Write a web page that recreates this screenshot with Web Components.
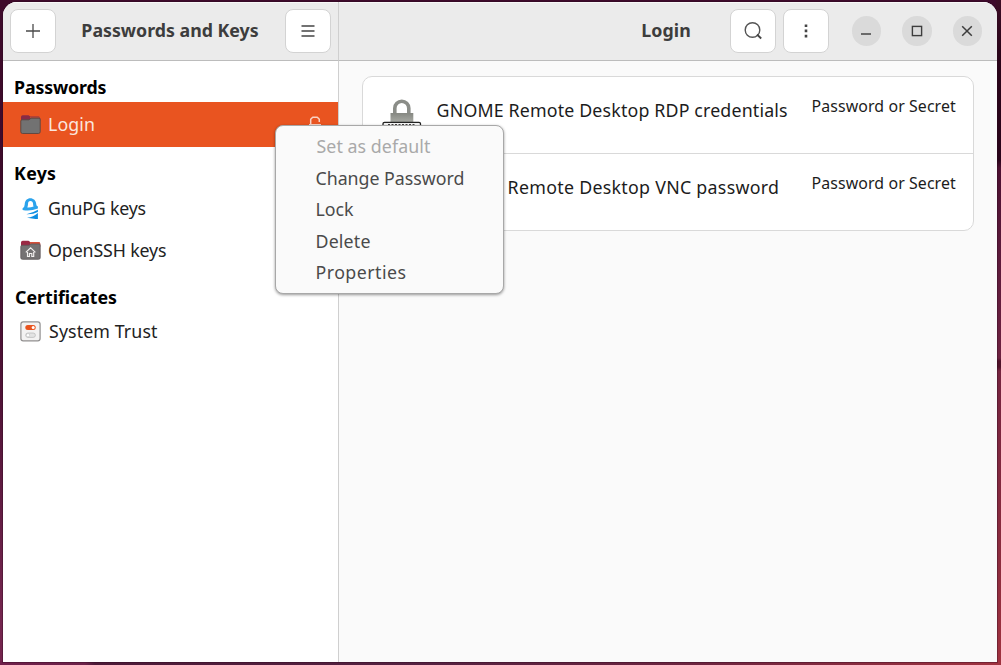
<!DOCTYPE html>
<html lang="en">
<head>
<meta charset="utf-8">
<title>Passwords and Keys</title>
<style>
html,body{margin:0;height:100%;overflow:hidden}
body{font-family:"Noto Sans","Open Sans",sans-serif;color:#1c1c1c}
</style>
</head>
<body>
<seahorse-desktop></seahorse-desktop>
<script>
const define = (name, html, ready) => {
  const t = document.createElement('template');
  t.innerHTML = html;
  customElements.define(name, class extends HTMLElement {
    constructor() {
      super();
      this.attachShadow({mode: 'open'}).append(t.content.cloneNode(true));
    }
    connectedCallback() { if (ready) ready(this, this.shadowRoot); }
  });
};

// Label whose tracking is set so that its ink spans the width in "w".
const ctx = document.createElement('canvas').getContext('2d');
define('fit-label', `<style>
:host{display:block;white-space:pre;line-height:24px;padding-bottom:2px;flex:none}
</style><slot></slot>`, (el) => {
  const size = el.getAttribute('size') || 17.8, weight = el.getAttribute('weight') || 400;
  const w = +el.getAttribute('w'), text = el.textContent;
  ctx.font = `${weight} ${size}px "Noto Sans"`;
  const m = ctx.measureText(text);
  const ink = m.actualBoundingBoxLeft + m.actualBoundingBoxRight;
  el.style.cssText += `;font-size:${size}px;font-weight:${weight};width:${w}px;` +
    `text-indent:${m.actualBoundingBoxLeft + .6}px;letter-spacing:${(w - .6 - ink) / (text.length - 1)}px`;
});

define('header-button', `<style>
:host{display:flex;box-sizing:border-box;width:46px;height:44px;border:1.5px solid #d3d3d3;border-radius:8px;background:#fff;align-items:center;justify-content:center;flex:none}
</style><slot></slot>`);

define('window-button', `<style>
:host{display:flex;width:29.5px;height:29.5px;border-radius:50%;background:#dadada;align-items:center;justify-content:center;flex:none}
</style><slot></slot>`);

define('side-heading', `<style>
:host{display:flex;box-sizing:border-box;height:41px;padding:13px 0 0 11.5px;align-items:center;color:#000}
</style><slot></slot>`);

define('side-row', `<style>
:host{display:flex;box-sizing:border-box;height:41.5px;padding:0 16px 0 17px;align-items:center;gap:7.5px;color:#222}
:host([selected]){height:45px;background:#e95420;color:#fbe6de}
::slotted([slot=icon]){flex:none;width:21px;height:21px}
.text{padding-top:1px}
:host([selected]) .text{padding-top:.5px}
.end{margin-left:auto;display:flex}
</style><slot name="icon"></slot><div class="text"><slot></slot></div><span class="end"><slot name="end"></slot></span>`);

define('key-row', `<style>
:host{display:flex;box-sizing:border-box;height:77px;padding:0 17px 0 18.5px;align-items:flex-start}
:host([divided]){border-bottom:1px solid #d9d9d9}
svg{width:40px;height:44px;margin:20px 15.5px 0 0;flex:none}
.name{margin-top:21px}
.kind{margin:16.5px 0 0 auto}
</style>
<svg viewBox="0 0 40 44">
<defs><linearGradient id="b" x1="0" y1="0" x2="0" y2="1"><stop offset="0" stop-color="#858781"/><stop offset="1" stop-color="#b2b4ae"/></linearGradient></defs>
<path d="M12.8 17V11.2a7 7 0 0 1 14 0V17" fill="none" stroke="#8b8d88" stroke-width="3.6"/>
<rect x="8.5" y="16" width="22.8" height="12" fill="url(#b)"/>
<rect x="1" y="25.300" width="37.500" height="14" rx="1.500" fill="#f5f5f5" stroke="#222" stroke-width="1.300"/>
<path d="M6 27.600h27" stroke="#444" stroke-width="1.400" stroke-dasharray="2 1.500"/>
</svg>
<div class="name"><slot name="name"></slot></div><div class="kind"><slot name="kind"></slot></div>`);

define('context-menu', `<style>
:host{display:flex;flex-direction:column;box-sizing:border-box;width:229px;height:169px;padding:5px 0 0 39.5px;border:1px solid #a8a8a8;border-radius:8px;background:#fafafa;box-shadow:0 1px 3px rgba(0,0,0,.4);color:#4a4a4a}
::slotted(*){box-sizing:border-box;height:31.5px;padding:0!important;line-height:30px!important}
::slotted([disabled]){color:#a9a9a9}
</style><slot></slot>`);

define('seahorse-desktop', `<style>
:host{display:block;position:relative;box-sizing:border-box;width:1001px;height:665px;padding:2px 4.5px 3.5px 3px;
background:
 linear-gradient(90deg,#70204b 0,#6c2149 85px,#4d1a38 95px,#552141 420px,#6e243f 700px,#a0323f 100%) 0 661px/100% 4px no-repeat,
 linear-gradient(180deg,#3d0d26 0,#2a0419 50px,#2a041b 160px,#4c1031 168px,#5c1a3b 255px,#6d2140 358px,#4e1229 361px,#511329 367px,#75243f 371px,#8c2c3e 560px,#a0323f 100%) 996px 0/5px 100% no-repeat,
 linear-gradient(180deg,#3e0a2b 0,#3e0b2b 200px,#521438 400px,#75264f 620px,#74244d 100%) 0 0/4px 100% no-repeat,
 #3e0a2b}
.window{display:grid;grid-template:59px 1fr/336px 1fr;width:993.5px;height:659.5px;border-radius:14px 14px 0 0;overflow:hidden;background:#fafafa;box-shadow:0 0 0 1px rgba(40,10,30,.35)}
header{display:flex;align-items:center;background:#ebebeb;border-bottom:1px solid #bcbcbc;box-sizing:border-box;box-shadow:inset 0 1px #f8f8f8}
.left{padding:0 7.500px 0 7px;justify-content:space-between}
.left,aside{border-right:1px solid #cfcfcf}
.right{padding-right:14.300px;justify-content:flex-end}
aside{background:#fff;box-sizing:border-box}
main{padding:15px 22.5px 0 23px}
.card{border:1px solid #d9d9d9;border-radius:10px;background:#fff;overflow:hidden;box-sizing:border-box;height:155px}
context-menu{position:absolute;left:275.400px;top:125px}
</style>
<div class="window">
<header class="left">
<header-button><svg width="16" height="16" viewBox="0 0 16 16"><path d="M8 1v14M1 8h14" stroke="#4a4a4a" stroke-width="1.300"/></svg></header-button>
<fit-label w="177" weight="700" style="color:#3d3d3d">Passwords and Keys</fit-label>
<header-button><svg width="14" height="14" viewBox="0 0 14 14"><path d="M.5 2h13M.5 7h13M.5 12h13" stroke="#444" stroke-width="1.300"/></svg></header-button>
</header>
<header class="right">
<fit-label w="48.500" weight="700" style="color:#3d3d3d;margin-right:39.500px">Login</fit-label>
<header-button style="margin-right:7.500px"><svg width="20" height="20" viewBox="0 0 20 20"><circle cx="9.500" cy="9" r="7.300" fill="none" stroke="#555" stroke-width="1.400"/><path d="M14 13.500l4.200 4" stroke="#444" stroke-width="1.800"/></svg></header-button>
<header-button style="margin-right:22.500px"><svg width="4" height="14" viewBox="0 0 4 14"><path d="M.7 .5h2.600v2.600H.7zM.7 5.600h2.600v2.600H.7zM.7 10.800h2.600v2.600H.7z" fill="#444"/></svg></header-button>
<window-button style="margin-right:21px"><svg width="12" height="12" viewBox="0 0 12 12"><path d="M1 9h10" stroke="#444" stroke-width="1.300"/></svg></window-button>
<window-button style="margin-right:21px"><svg width="12" height="12" viewBox="0 0 12 12"><rect x="1.400" y="1.400" width="9.200" height="9.200" fill="none" stroke="#3d3d3d" stroke-width="1.400"/></svg></window-button>
<window-button><svg width="12" height="12" viewBox="0 0 12 12"><path d="M1.200 1.200l9.600 9.600M10.800 1.200L1.200 10.800" stroke="#3d3d3d" stroke-width="1.500"/></svg></window-button>
</header>
<aside>
<side-heading><fit-label w="92" weight="700">Passwords</fit-label></side-heading>
<side-row selected>
<svg slot="icon" viewBox="0 0 21 21"><path d="M1 3q0-1.700 1.700-1.700h5.800l1.800 1.300h8.200q1.700 0 1.700 1.700V7H1z" fill="#892b45"/><path d="M10 2.800h8.600q1.600 0 1.600 1.600V6H10z" fill="#b04a3c"/><path d="M.8 7q0-1.200 1.200-1.200h7L11 4.200h8q1.200 0 1.200 1.200v12.400q0 1.700-1.700 1.700h-16q-1.700 0-1.700-1.700z" fill="#727272" stroke="#5b4540" stroke-width=".9"/></svg>
<fit-label w="45.500">Login</fit-label>
<svg slot="end" width="14" height="20" viewBox="0 0 14 20"><path d="M2.700 10V4.300l2-2h4.600l2 2V7" fill="none" stroke="#f9d3c5" stroke-width="1.500" stroke-linejoin="round"/><rect x="1" y="9" width="12" height="8" fill="#f9d3c5"/></svg>
</side-row>
<side-heading><fit-label w="41.500" weight="700">Keys</fit-label></side-heading>
<side-row>
<svg slot="icon" viewBox="0 0 21 21"><path d="M2.600 10.200Q4.500 9.700 4.700 6.400C4.900 2.300 7.200.2 10.300.2s5.800 2.100 6 6.200Q16.400 8 17.900 8.600V10.600Q10 13.600 2.600 12z" fill="#2ba3ec"/><path d="M7.300 9.400Q8 7.800 8 6.300C8 4 8.800 3 10.400 3s2.600 1 2.700 3.300q0 1.200.5 2.200Q10.500 9.600 7.300 9.400z" fill="#fff"/><path d="M17.900 11.700v2.200q-5 2.600-11.500 2.300Q13 14.700 17.900 11.700zM17.900 14.900v6H15.500L7 19.700q6.500-.9 10.900-4.800z" fill="#0d8ee2"/></svg>
<fit-label w="97">GnuPG keys</fit-label></side-row>
<side-row>
<svg slot="icon" viewBox="0 0 21 21"><path d="M1 2.500q0-1.700 1.700-1.700h5.800l1.800 1.200h8.200q1.700 0 1.700 1.700V7H1z" fill="#9b2944"/><path d="M10 2h8.600q1.600 0 1.600 1.600V5.500H10z" fill="#d6503a"/><path d="M.8 6.500q0-1.200 1.200-1.200h7l2-1.300h8q1.200 0 1.200 1.200v12.600q0 1.500-1.700 1.500h-16q-1.700 0-1.700-1.500z" fill="#757273" stroke="#5d5759" stroke-width=".8"/><path d="M5.800 12.300l4.800-4.500 4.800 4.500M7.500 12v4.500h1.900v-3h2.400v3h1.900V12" fill="none" stroke="#f3f0ef" stroke-width="1.150"/></svg>
<fit-label w="117.500">OpenSSH keys</fit-label></side-row>
<side-heading style="height:40px"><fit-label w="102.500" weight="700">Certificates</fit-label></side-heading>
<side-row>
<svg slot="icon" viewBox="0 0 21 21"><rect x=".9" y=".9" width="19.200" height="19" rx="2.300" fill="#f3f2f2" stroke="#929090" stroke-width="1.200"/><rect x="5.300" y="4" width="10.400" height="5" rx="2.500" fill="#e9541f"/><circle cx="13.200" cy="6.500" r="1.500" fill="#fff"/><rect x="5.700" y="12" width="9.700" height="4.400" rx="2.200" fill="#e3e3e3" stroke="#bdbdbd" stroke-width=".8"/><circle cx="8" cy="14.200" r="1.700" fill="#fff" stroke="#bdbdbd" stroke-width=".6"/></svg>
<fit-label w="109.500">System Trust</fit-label></side-row>
</aside>
<main>
<div class="card">
<key-row divided><fit-label slot="name" w="350">GNOME Remote Desktop RDP credentials</fit-label><fit-label slot="kind" size="15.900" w="144">Password or Secret</fit-label></key-row>
<key-row><fit-label slot="name" w="270" style="margin-left:71px">Remote Desktop VNC password</fit-label><fit-label slot="kind" size="15.900" w="144">Password or Secret</fit-label></key-row>
</div>
</main>
</div>
<context-menu>
<fit-label w="115" disabled>Set as default</fit-label>
<fit-label w="147.500">Change Password</fit-label>
<fit-label w="38">Lock</fit-label>
<fit-label w="54.500">Delete</fit-label>
<fit-label w="89.500">Properties</fit-label>
</context-menu>`);
</script>
</body>
</html>
